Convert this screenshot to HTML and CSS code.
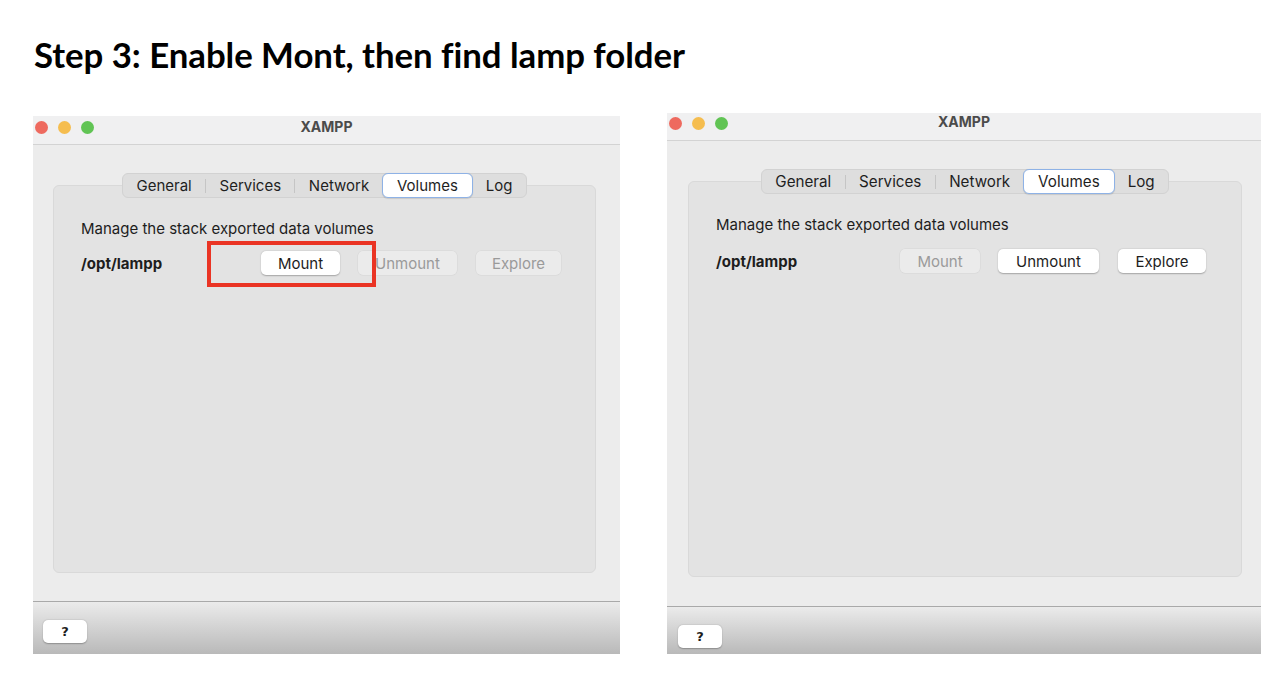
FILE: index.html
```html
<!DOCTYPE html>
<html lang="en">
<head>
<meta charset="utf-8">
<title>Step 3: Enable Mont, then find lamp folder</title>
<link rel="stylesheet" href="styles.css">
</head>
<body>
<div class="page">
  <h1 class="heading">Step 3: Enable Mont, then find lamp folder</h1>
  <div class="windows">
    <div class="window window-left">
      <div class="titlebar">
        <div class="lights">
          <span class="light red"></span><span class="light yellow"></span><span class="light green"></span>
        </div>
        <div class="title">XAMPP</div>
      </div>
      <div class="content">
        <div class="tabs">
          <span class="tab">General</span><span class="sep"></span>
          <span class="tab">Services</span><span class="sep"></span>
          <span class="tab">Network</span>
          <span class="tab active">Volumes</span>
          <span class="tab">Log</span>
        </div>
        <div class="box">
          <div class="desc">Manage the stack exported data volumes</div>
          <div class="row">
            <span class="path">/opt/lampp</span>
            <span class="btn btn-mount">Mount</span>
            <span class="btn btn-unmount disabled">Unmount</span>
            <span class="btn btn-explore disabled">Explore</span>
          </div>
        </div>
      </div>
      <div class="bottombar">
        <span class="btn help">?</span>
      </div>
      <div class="highlight"></div>
    </div>

    <div class="window window-right">
      <div class="titlebar">
        <div class="lights">
          <span class="light red"></span><span class="light yellow"></span><span class="light green"></span>
        </div>
        <div class="title">XAMPP</div>
      </div>
      <div class="content">
        <div class="tabs">
          <span class="tab">General</span><span class="sep"></span>
          <span class="tab">Services</span><span class="sep"></span>
          <span class="tab">Network</span>
          <span class="tab active">Volumes</span>
          <span class="tab">Log</span>
        </div>
        <div class="box">
          <div class="desc">Manage the stack exported data volumes</div>
          <div class="row">
            <span class="path">/opt/lampp</span>
            <span class="btn btn-mount disabled">Mount</span>
            <span class="btn btn-unmount">Unmount</span>
            <span class="btn btn-explore">Explore</span>
          </div>
        </div>
      </div>
      <div class="bottombar">
        <span class="btn help">?</span>
      </div>
    </div>
  </div>
</div>
</body>
</html>
```

FILE: styles.css
```css
* { box-sizing: border-box; }

html, body {
  margin: 0;
  padding: 0;
  background: #ffffff;
}

body {
  width: 1286px;
  height: 684px;
  overflow: hidden;
  font-family: Inter, "Liberation Sans", Arial, sans-serif;
  color: #1d1d1d;
}

.page {
  display: flex;
  flex-direction: column;
}

.heading {
  margin: 35px 0 0 34px;
  font-family: Lato, "Open Sans", sans-serif;
  font-weight: 700;
  font-size: 34.8px;
  line-height: 40px;
  color: #000;
  letter-spacing: -0.05px;
}

.windows {
  display: flex;
  align-items: flex-start;
  gap: 47px;
  padding-left: 33px;
  margin-top: 38px;
}

.window {
  position: relative;
  display: flex;
  flex-direction: column;
  background: #ececec;
}

.window-left {
  width: 587px;
  height: 538px;
  margin-top: 3px;
}

.window-right {
  width: 594px;
  height: 541px;
}

.titlebar {
  position: relative;
  display: flex;
  align-items: flex-start;
  height: 29px;
  padding-top: 5px;
  background: #f0f0f1;
  border-bottom: 1px solid #d3d3d3;
}

.window-right .titlebar {
  height: 28px;
  padding-top: 4px;
}

.lights {
  display: flex;
  gap: 10px;
  padding-left: 2px;
}

.light {
  width: 13px;
  height: 13px;
  border-radius: 50%;
}

.red { background: #ee6a5f; }
.yellow { background: #f5bd4f; }
.green { background: #61c454; }

.title {
  position: absolute;
  top: 2px;
  left: 0;
  right: 0;
  text-align: center;
  font-weight: 700;
  font-size: 14px;
  line-height: 18px;
  color: #4b4b4b;
  pointer-events: none;
}

.window-right .title {
  top: 0;
}

.content {
  flex: 1;
  display: flex;
  flex-direction: column;
  padding: 28px 24px 28px 20px;
}

.window-right .content {
  padding: 28px 19px 29px 21px;
}

.tabs {
  position: relative;
  z-index: 1;
  align-self: center;
  display: flex;
  align-items: center;
  height: 25px;
  background: #dedede;
  border: 1px solid #d2d2d2;
  border-radius: 6px;
  font-size: 15px;
  color: #1e1e1e;
}

.window-right .tabs {
  font-size: 15.2px;
}

.tab {
  display: flex;
  align-items: center;
  height: 23px;
  padding: 0 13.4px;
}

.tab.active {
  height: 25px;
  margin: 0 -1px;
  padding: 0 14.5px;
  background: #ffffff;
  border: 1px solid #8eb2e6;
  border-radius: 6px;
  box-shadow: 0 0.5px 1px rgba(0,0,0,0.12);
}

.sep {
  width: 1px;
  height: 14px;
  background: #c5c5c5;
}

.box {
  flex: 1;
  margin-top: -13px;
  padding: 34px 27px 0;
  background: #e3e3e3;
  border: 1px solid #d9d9d9;
  border-radius: 6px;
}

.desc {
  font-size: 15px;
  line-height: 18px;
  color: #1d1d1d;
}

.row {
  display: flex;
  align-items: center;
  margin-top: 13px;
}

.path {
  width: 180px;
  font-weight: 700;
  font-size: 15px;
  color: #1d1d1d;
}

.window-right .row {
  margin-top: 15px;
}

.window-right .path {
  width: 184px;
}

.btn {
  display: flex;
  align-items: center;
  justify-content: center;
  height: 24px;
  background: #ffffff;
  border-radius: 5px;
  box-shadow: 0 0.5px 1.5px rgba(0,0,0,0.28);
  font-size: 15px;
  color: #1d1d1d;
}

.btn.disabled {
  background: #ebebeb;
  color: #9a9a9a;
  box-shadow: 0 0 0 0.5px rgba(0,0,0,0.06);
}

.btn-mount { width: 79px; }
.btn-unmount { width: 99px; margin-left: 18px; }
.btn-explore { width: 85px; margin-left: 19px; }

.window-right .btn-mount { width: 80px; }
.window-right .btn-unmount { width: 101px; }
.window-right .btn-explore { width: 88px; }

.bottombar {
  display: flex;
  align-items: flex-start;
  height: 53px;
  padding: 18px 0 0 10px;
  border-top: 1px solid #a9a9a9;
  background: linear-gradient(#ebebeb, #b9b9b9);
}

.window-right .bottombar {
  height: 48px;
  padding-left: 11px;
}

.btn.help {
  width: 44px;
  height: 23px;
  font-weight: 700;
  font-size: 13px;
  font-family: "DejaVu Sans", sans-serif;
}

.highlight {
  position: absolute;
  left: 174px;
  top: 125px;
  width: 169px;
  height: 46px;
  border: 4px solid #ea3424;
}
```
